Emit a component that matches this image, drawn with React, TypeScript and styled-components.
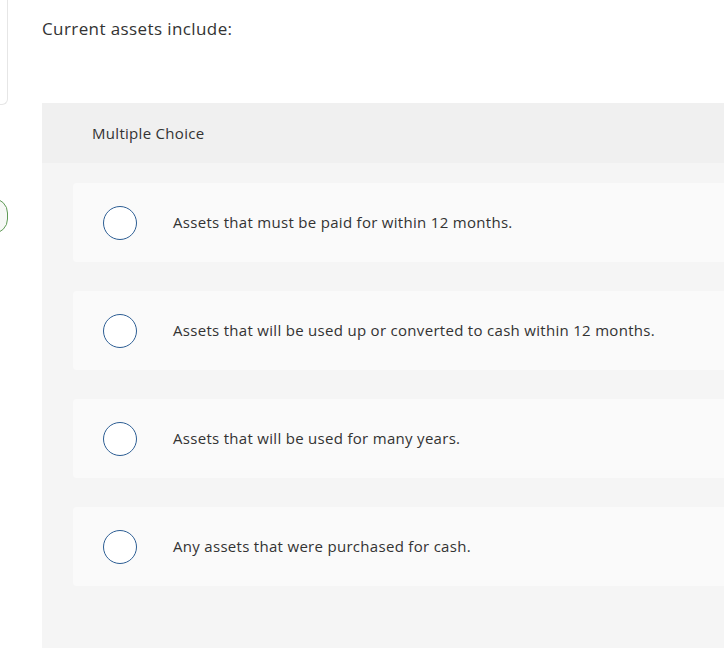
import { FunctionComponent } from "react";
import styled, { createGlobalStyle } from "styled-components";

const GlobalStyle = createGlobalStyle`
  html, body {
    margin: 0;
    padding: 0;
    background: #ffffff;
  }
  body {
    font-family: "Open Sans", Arial, sans-serif;
    color: #333333;
  }
`;

const Page = styled.div`
  width: 724px;
  height: 648px;
  display: flex;
  flex-direction: row;
  overflow: hidden;
  background: #ffffff;
`;

const Rail = styled.div`
  width: 8px;
  flex-shrink: 0;
  display: flex;
  flex-direction: column;
  align-items: flex-end;
`;

const PrevCard = styled.div`
  width: 40px;
  height: 105px;
  box-sizing: border-box;
  border-right: 1px solid #e6e6e6;
  border-bottom: 1px solid #e6e6e6;
  border-bottom-right-radius: 6px;
  background: #ffffff;
`;

const StatusPill = styled.div`
  margin-top: 93px;
  width: 30px;
  height: 36px;
  box-sizing: border-box;
  border: 1px solid #5f9a55;
  border-radius: 18px;
  background: #f6f8f5;
`;

const Main = styled.div`
  flex: 1;
  margin-left: 34px;
  display: flex;
  flex-direction: column;
  min-width: 0;
`;

const Question = styled.div`
  height: 103px;
  box-sizing: border-box;
  padding-top: 18px;
  font-size: 17px;
  line-height: 22px;
  letter-spacing: 0.4px;
  color: #333333;
`;

const Panel = styled.div`
  flex: 1;
  width: 760px;
  background: #f5f5f5;
  display: flex;
  flex-direction: column;
`;

const PanelHeader = styled.div`
  height: 60px;
  background: #f0f0f0;
  display: flex;
  align-items: center;
  padding-left: 50px;
  font-size: 15px;
  letter-spacing: 0.3px;
  color: #333333;
`;

const Options = styled.div`
  display: flex;
  flex-direction: column;
  gap: 29px;
  padding: 20px 0 0 31px;
`;

const Option = styled.label`
  height: 79px;
  background: #fafafa;
  border-radius: 4px;
  display: flex;
  flex-direction: row;
  align-items: center;
  padding-left: 30px;
  gap: 36px;
  cursor: pointer;
`;

const Radio = styled.span`
  width: 34px;
  height: 34px;
  box-sizing: border-box;
  border: 1.5px solid #2d5e94;
  border-radius: 50%;
  background: #ffffff;
  flex-shrink: 0;
`;

const OptionText = styled.span`
  font-size: 15px;
  line-height: 20px;
  letter-spacing: 0.3px;
  color: #333333;
  margin-top: -2px;
`;

const choices = [
  "Assets that must be paid for within 12 months.",
  "Assets that will be used up or converted to cash within 12 months.",
  "Assets that will be used for many years.",
  "Any assets that were purchased for cash.",
];

const App: FunctionComponent = () => {
  return (
    <>
      <GlobalStyle />
      <Page>
        <Rail>
          <PrevCard />
          <StatusPill />
        </Rail>
        <Main>
          <Question>Current assets include:</Question>
          <Panel>
            <PanelHeader>Multiple Choice</PanelHeader>
            <Options>
              {choices.map((c) => (
                <Option key={c}>
                  <Radio />
                  <OptionText>{c}</OptionText>
                </Option>
              ))}
            </Options>
          </Panel>
        </Main>
      </Page>
    </>
  );
};

export default App;
